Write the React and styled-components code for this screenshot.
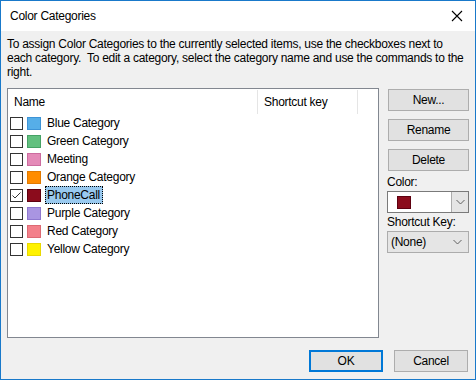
import React from 'react';
import styled, { createGlobalStyle } from 'styled-components';

const GlobalStyle = createGlobalStyle`
  html, body {
    margin: 0;
    padding: 0;
    width: 476px;
    height: 380px;
    overflow: hidden;
    background: #f0f0f0;
  }
  * {
    box-sizing: border-box;
  }
`;

const categories = [
  { name: 'Blue Category', fill: '#56aee8', edge: '#3d93d6' },
  { name: 'Green Category', fill: '#62c07f', edge: '#46a265' },
  { name: 'Meeting', fill: '#e48ab8', edge: '#cc6c9f' },
  { name: 'Orange Category', fill: '#ff8c00', edge: '#e27a00' },
  { name: 'PhoneCall', fill: '#8b0c1c', edge: '#5e0010', checked: true, selected: true },
  { name: 'Purple Category', fill: '#a995e2', edge: '#8e78cf' },
  { name: 'Red Category', fill: '#f3808a', edge: '#dd6a73' },
  { name: 'Yellow Category', fill: '#fff200', edge: '#e9d800' },
];

const Chevron = () => (
  <svg width="9" height="6" viewBox="0 0 9 6">
    <path d="M0.5 1 L4.5 5 L8.5 1" fill="none" stroke="#606060" strokeWidth="1" />
  </svg>
);

const App = () => {
  return (
    <>
      <GlobalStyle />
      <Window>
        <TitleBar>
          <Title>Color Categories</Title>
          <CloseButton>
            <svg width="12" height="12" viewBox="0 0 12 12">
              <path d="M1 1 L11 11 M11 1 L1 11" stroke="#000" strokeWidth="1.1" />
            </svg>
          </CloseButton>
        </TitleBar>
        <Body>
          <Description>
            To assign Color Categories to the currently selected items, use the checkboxes next to
            <br />
            each category.&nbsp; To edit a category, select the category name and use the commands to the
            <br />
            right.
          </Description>
          <Main>
            <ListBox>
              <Header>
                <HeaderCell $width={250}>Name</HeaderCell>
                <HeaderCell $width={100}>Shortcut key</HeaderCell>
              </Header>
              {categories.map((cat) => (
                <Row key={cat.name}>
                  <Checkbox>
                    {cat.checked && (
                      <svg width="11" height="11" viewBox="0 0 11 11">
                        <path d="M1.5 5.5 L4 8 L9.5 2.5" fill="none" stroke="#333" strokeWidth="1" />
                      </svg>
                    )}
                  </Checkbox>
                  <Swatch $fill={cat.fill} $edge={cat.edge} />
                  <Label $selected={cat.selected}>{cat.name}</Label>
                </Row>
              ))}
            </ListBox>
            <Side>
              <ButtonStack>
                <Button>New...</Button>
                <Button>Rename</Button>
                <Button>Delete</Button>
              </ButtonStack>
              <FieldLabel>Color:</FieldLabel>
              <ColorCombo>
                <ColorField>
                  <Swatch $fill="#8b0c1c" $edge="#5e0010" $w={14} $h={13} />
                </ColorField>
                <DropPart>
                  <Chevron />
                </DropPart>
              </ColorCombo>
              <FieldLabel>Shortcut Key:</FieldLabel>
              <Select>
                <span>(None)</span>
                <Chevron />
              </Select>
            </Side>
          </Main>
          <Footer>
            <Button $default $width={74}>OK</Button>
            <Button $width={74}>Cancel</Button>
          </Footer>
        </Body>
      </Window>
    </>
  );
};

const Window = styled.div`
  width: 476px;
  height: 380px;
  border: 1px solid #1979ca;
  display: flex;
  flex-direction: column;
  font-family: 'Liberation Sans', Arial, sans-serif;
  font-size: 12px;
  letter-spacing: -0.27px;
  color: #000;
  background: #f0f0f0;
`;

const TitleBar = styled.div`
  height: 30px;
  background: #fff;
  display: flex;
  align-items: center;
  justify-content: space-between;
  padding-left: 9px;
`;

const Title = styled.span`
  font-size: 12px;
`;

const CloseButton = styled.div`
  width: 46px;
  height: 30px;
  display: flex;
  align-items: center;
  justify-content: center;
  margin-right: -5px;
`;

const Body = styled.div`
  flex: 1;
  display: flex;
  flex-direction: column;
  padding: 6px 6px 0 6px;
`;

const Description = styled.p`
  margin: 0;
  line-height: 14px;
  height: 51px;
  white-space: nowrap;
`;

const Main = styled.div`
  display: flex;
  gap: 8px;
`;

const ListBox = styled.div`
  width: 372px;
  height: 250px;
  border: 1px solid #828790;
  background: #fff;
`;

const Header = styled.div`
  display: flex;
  height: 25px;
  padding-top: 1px;
`;

const HeaderCell = styled.div`
  width: ${(p) => p.$width}px;
  height: 24px;
  border-right: 1px solid #e5e5e5;
  display: flex;
  align-items: center;
  padding-left: 6px;
`;

const Row = styled.div`
  height: 18px;
  display: flex;
  align-items: center;
  padding-left: 2px;
`;

const Checkbox = styled.div`
  width: 13px;
  height: 13px;
  border: 1px solid #333;
  background: #fff;
  display: flex;
  align-items: center;
  justify-content: center;
  margin-right: 4px;
`;

const Swatch = styled.div`
  width: ${(p) => p.$w || 14}px;
  height: ${(p) => p.$h || 13}px;
  background: ${(p) => p.$fill};
  border: 1px solid ${(p) => p.$edge};
`;

const Label = styled.div`
  margin-left: 4px;
  height: 18px;
  display: flex;
  align-items: center;
  padding: 0 2px 0 1px;
  border: 1px dotted ${(p) => (p.$selected ? '#000' : 'transparent')};
  background: ${(p) => (p.$selected ? '#99c9ef' : 'transparent')};
`;

const Side = styled.div`
  width: 82px;
  display: flex;
  flex-direction: column;
  padding-top: 1px;
`;

const ButtonStack = styled.div`
  display: flex;
  flex-direction: column;
  gap: 8px;
  margin-bottom: 4px;
`;

const Button = styled.div`
  width: ${(p) => p.$width || 81}px;
  height: 22px;
  margin-left: 1px;
  background: #e1e1e1;
  border: ${(p) => (p.$default ? '2px solid #0078d7' : '1px solid #adadad')};
  display: flex;
  align-items: center;
  justify-content: center;
`;

const FieldLabel = styled.div`
  height: 15px;
  line-height: 15px;
  margin-bottom: 1px;
`;

const ColorCombo = styled.div`
  height: 22px;
  display: flex;
  border: 1px solid #7a7a7a;
  background: #fff;
  margin-bottom: 2px;
`;

const ColorField = styled.div`
  flex: 1;
  display: flex;
  align-items: center;
  padding-left: 9px;
`;

const DropPart = styled.div`
  width: 17px;
  background: #e5e5e5;
  border-left: 1px solid #acacac;
  display: flex;
  align-items: center;
  justify-content: center;
`;

const Select = styled.div`
  height: 22px;
  display: flex;
  align-items: center;
  justify-content: space-between;
  padding: 0 6px 0 3px;
  background: #e5e5e5;
  border: 1px solid #acacac;
`;

const Footer = styled.div`
  display: flex;
  justify-content: flex-end;
  gap: 10px;
  margin-top: 12px;
  padding-right: 1px;
`;

export default App;
